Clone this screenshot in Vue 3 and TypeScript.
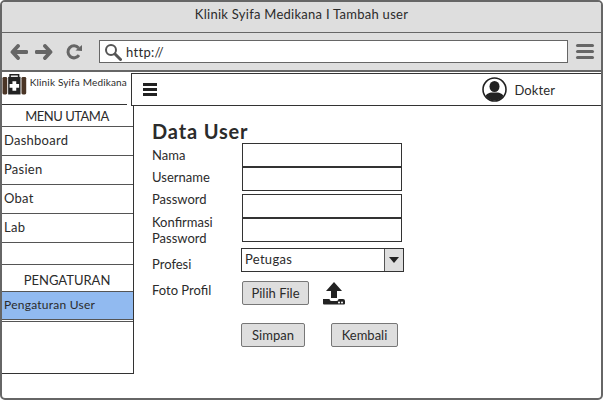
<script setup lang="ts">
const menuItems = ["Dashboard", "Pasien", "Obat", "Lab"];
</script>

<template>
  <div class="window">
    <header class="titlebar">Klinik Syifa Medikana I Tambah user</header>
    <div class="toolbar">
      <svg class="nav-icon" width="18" height="16" viewBox="0 0 18 16">
        <path d="M8 2 2.500 8 8 14M3 8h13.500" fill="none" stroke="#666" stroke-width="3.800" stroke-linecap="round" stroke-linejoin="round" />
      </svg>
      <svg class="nav-icon" width="18" height="16" viewBox="0 0 18 16">
        <path d="M10 2l5.500 6-5.500 6M15 8H1.500" fill="none" stroke="#666" stroke-width="3.800" stroke-linecap="round" stroke-linejoin="round" />
      </svg>
      <svg class="nav-icon nav-icon--reload" width="17" height="16" viewBox="0 0 17 16">
        <path d="M13 11.200A6 6 0 1 1 12.600 4" fill="none" stroke="#666" stroke-width="3" />
        <path d="M9.500 6.500 16 7V1z" fill="#666" />
      </svg>
      <div class="address">
        <svg width="18" height="18" viewBox="0 0 18 18">
          <circle cx="7" cy="7" r="5" fill="none" stroke="#555" stroke-width="2" />
          <path d="m11 11 5.500 5.500" stroke="#555" stroke-width="3" stroke-linecap="round" />
        </svg>
        <span>http://</span>
      </div>
      <div class="burger">
        <i /><i /><i />
      </div>
    </div>

    <div class="page">
      <aside class="sidebar">
        <div class="brand">
          <svg width="26" height="23" viewBox="0 0 26 23">
            <path d="M8.500 4V1.200h9V4" fill="none" stroke="#222" stroke-width="1.600" />
            <rect x="0.500" y="3.500" width="5" height="18.500" rx="1.500" fill="#4a3526" />
            <rect x="20.500" y="3.500" width="5" height="18.500" rx="1.500" fill="#4a3526" />
            <rect x="6.500" y="3.500" width="13" height="18.500" fill="#222" />
            <path d="M11 8h4v3h3v4h-3v3h-4v-3H8v-4h3z" fill="#fff" />
          </svg>
          <span>Klinik Syifa Medikana</span>
        </div>
        <div class="side-body">
          <div class="side-head side-head--menu">MENU UTAMA</div>
          <a v-for="item in menuItems" :key="item" class="side-item">{{ item }}</a>
          <div class="side-gap" />
          <div class="side-head side-head--tall">PENGATURAN</div>
          <a class="side-item side-item--active">Pengaturan User</a>
          <div class="side-rest" />
        </div>
      </aside>

      <main class="main">
        <nav class="navbar">
          <div class="nav-burger"><i /><i /><i /></div>
          <div class="profile">
            <svg width="25" height="25" viewBox="0 0 25 25">
              <defs>
                <clipPath id="avatar-clip"><circle cx="12.500" cy="12.500" r="11" /></clipPath>
              </defs>
              <circle cx="12.500" cy="12.500" r="11.500" fill="#fff" stroke="#222" stroke-width="1.600" />
              <g clip-path="url(#avatar-clip)" fill="#222">
                <ellipse cx="12.500" cy="9.500" rx="5" ry="5.500" />
                <path d="M2 25c0-7 4-9 7-9.500h7c3 .5 7 2.500 7 9.500z" />
              </g>
            </svg>
            <span>Dokter</span>
          </div>
        </nav>

        <section class="content">
          <h1>Data User</h1>
          <form class="form" @submit.prevent>
            <div class="labels">
              <label>Nama</label>
              <label>Username</label>
              <label>Password</label>
              <label class="label-two">Konfirmasi<br />Password</label>
            </div>
            <div class="fields">
              <div class="input" />
              <div class="input" />
              <div class="input input--second" />
              <div class="input" />
            </div>

            <label class="label-profesi">Profesi</label>
            <div class="select">
              <span>Petugas</span>
              <b><svg width="10" height="6" viewBox="0 0 10 6"><path d="M0 0h10L5 6z" fill="#222" /></svg></b>
            </div>

            <label class="label-foto">Foto Profil</label>
            <div class="upload">
              <button type="button" class="btn btn--file">Pilih File</button>
              <svg width="24" height="23" viewBox="0 0 24 23">
                <path d="M12 0 4 9h5v7h6V9h5z" fill="#222" />
                <path d="M1 17h6.500a2 2 0 0 0 2 2h5a2 2 0 0 0 2-2H21a2 2 0 0 1 2 2v2.500a1 1 0 0 1-1 1H2a1 1 0 0 1-1-1z" fill="#222" />
                <circle cx="17" cy="20.500" r="1" fill="#fff" />
                <circle cx="20" cy="20.500" r="1" fill="#fff" />
              </svg>
            </div>

            <div class="actions">
              <button type="submit" class="btn btn--save">Simpan</button>
              <button type="button" class="btn btn--back">Kembali</button>
            </div>
          </form>
        </section>
      </main>
    </div>
  </div>
</template>

<style scoped>
.window {
  display: flex;
  flex-direction: column;
  box-sizing: border-box;
  width: 603px;
  height: 400px;
  overflow: hidden;
  color: #2b2b2b;
  font-family: Lato, "Liberation Sans", sans-serif;
  background: #fff;
  border: 2px solid #666;
  border-radius: 5px;
}

.titlebar {
  flex: none;
  box-sizing: border-box;
  height: 31px;
  padding-top: 3px;
  font-size: 13px;
  line-height: 18px;
  letter-spacing: 0.27px;
  text-align: center;
  background: #dedede;
  border-bottom: 1px solid #666;
}

.toolbar {
  display: flex;
  flex: none;
  align-items: center;
  box-sizing: border-box;
  height: 39px;
  padding: 0 3px 0 8px;
  background: #dedede;
  border-bottom: 2px solid #666;
}

.nav-icon {
  margin-right: 7px;
}

.nav-icon--reload {
  margin-left: 6px;
  margin-right: 16px;
}

.address {
  display: flex;
  flex: none;
  align-items: center;
  gap: 4px;
  box-sizing: border-box;
  width: 469px;
  height: 23px;
  padding-left: 4px;
  font-size: 13px;
  letter-spacing: 0.3px;
  background: #fff;
  border: 1px solid #666;
}

.burger {
  display: flex;
  flex-direction: column;
  gap: 3px;
  margin-left: 8px;
}

.burger i {
  display: block;
  width: 18px;
  height: 3px;
  background: #666;
  border-radius: 2px;
}

.page {
  display: flex;
  flex: 1;
  min-height: 0;
}

.sidebar {
  display: flex;
  flex: none;
  flex-direction: column;
  box-sizing: border-box;
  width: 134px;
  height: 302px;
  margin-left: -2px;
  background: #fff;
}

.brand {
  display: flex;
  flex: none;
  align-items: flex-start;
  gap: 3px;
  box-sizing: border-box;
  width: 127px;
  height: 33px;
  padding: 1px 0 0 2px;
  font-size: 10px;
  line-height: 18px;
  letter-spacing: 0.17px;
  white-space: nowrap;
  border-bottom: 1px solid #333;
}

.side-body {
  display: flex;
  flex: 1;
  flex-direction: column;
  border-right: 1px solid #333;
  border-bottom: 1px solid #333;
  border-left: 1px solid #333;
}

.side-head {
  flex: none;
  box-sizing: border-box;
  height: 22px;
  font-size: 13px;
  line-height: 22px;
  text-align: center;
  border-bottom: 1px solid #555;
}

.side-head--menu {
  letter-spacing: -0.5px;
}

.side-head--tall {
  height: 28px;
  padding-top: 2px;
  line-height: 26px;
  border-top: 1px solid #555;
}

.side-item {
  flex: none;
  box-sizing: border-box;
  height: 29px;
  padding-left: 3px;
  font-size: 13px;
  line-height: 26px;
  letter-spacing: 0.25px;
  border-bottom: 1px solid #555;
}

.side-item--active {
  height: 28px;
  font-size: 12px;
  background: #91baf0;
}

.side-gap {
  flex: none;
  height: 21px;
}

.side-rest {
  flex: 1;
  margin-top: 1px;
  border-top: 1px solid #555;
}

.main {
  display: flex;
  flex: 1;
  flex-direction: column;
  min-width: 0;
  margin-left: -3px;
}

.navbar {
  position: relative;
  display: flex;
  flex: none;
  align-items: center;
  justify-content: space-between;
  box-sizing: border-box;
  height: 33px;
  margin-top: 1px;
  padding: 0 46px 0 11px;
  background: #fff;
  border-top: 1px solid #333;
  border-bottom: 1px solid #333;
  border-left: 1px solid #333;
}

.nav-burger {
  display: flex;
  flex-direction: column;
  gap: 2px;
}

.nav-burger i {
  display: block;
  width: 14px;
  height: 3px;
  background: #222;
}

.profile {
  display: flex;
  align-items: center;
  gap: 7px;
  font-size: 13px;
  letter-spacing: 0.1px;
}

.content {
  padding: 13px 0 0 21px;
}

h1 {
  margin: 0;
  font-size: 20px;
  font-weight: 700;
  line-height: 24px;
  letter-spacing: 0.85px;
}

.form {
  display: grid;
  grid-template-columns: 89px 165px;
  font-size: 13px;
}

label {
  display: block;
}

.labels {
  padding-top: 2px;
}

.labels label {
  height: 22px;
  line-height: 20px;
}

.labels .label-two {
  height: auto;
  margin-top: 3px;
  line-height: 16px;
}

.fields {
  display: flex;
  flex-direction: column;
}

.input {
  box-sizing: border-box;
  width: 160px;
  height: 24px;
  margin-left: 1px;
  background: #fff;
  border: 1px solid #333;
}

.input--second {
  margin-top: 3px;
}

.label-profesi {
  margin-top: 8px;
  line-height: 20px;
}

.select {
  display: flex;
  justify-content: space-between;
  box-sizing: border-box;
  width: 163px;
  height: 24px;
  margin-top: 2px;
  padding-left: 3px;
  line-height: 20px;
  letter-spacing: 0.3px;
  background: #fff;
  border: 1px solid #333;
}

.select b {
  display: flex;
  align-items: center;
  justify-content: center;
  width: 18px;
  background: #dedede;
  border-left: 1px solid #555;
}

.label-foto {
  margin-top: 6px;
  line-height: 20px;
}

.upload {
  display: flex;
  align-items: center;
  gap: 13px;
  margin-top: 7px;
  margin-left: 1px;
}

.btn {
  box-sizing: border-box;
  height: 24px;
  padding: 0;
  color: #2b2b2b;
  font: inherit;
  background: #dedede;
  border: 1px solid #777;
  border-radius: 2px;
}

.btn--file {
  width: 67px;
}

.actions {
  display: flex;
  grid-column: 2;
  gap: 26px;
  margin-top: 18px;
}

.btn--save {
  width: 64px;
}

.btn--back {
  width: 67px;
}
</style>
